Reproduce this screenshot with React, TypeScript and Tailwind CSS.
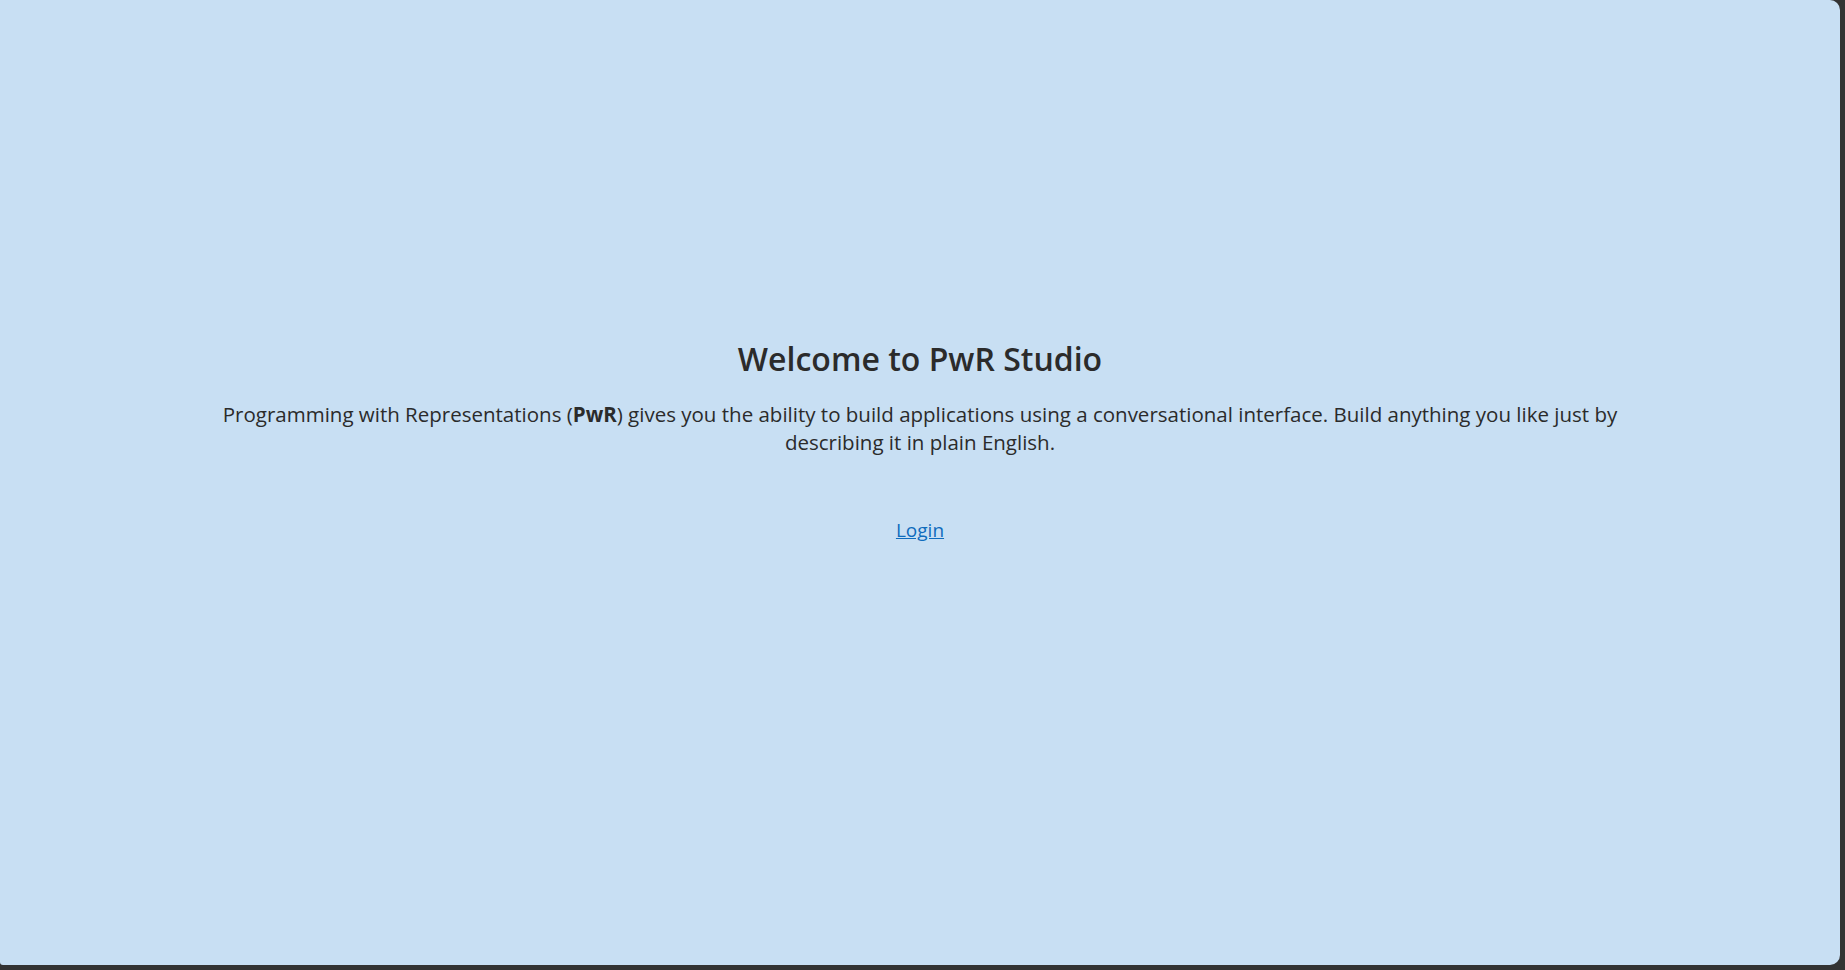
import React from "react";

export default function App() {
    return (
        <div className="h-[970px] w-full bg-[#333333] overflow-hidden">
            <div
                className="flex h-[965px] w-[1840px] flex-col items-center rounded-tr-[10px] rounded-br-[10px] rounded-bl-[3px] bg-[#c8dff3] pt-[337px] text-[#2b2b2b]"
                style={{ fontFamily: '"Open Sans", "Noto Sans", sans-serif' }}
            >
                <h1 className="text-[32px] font-semibold leading-[44px]">
                    Welcome to PwR Studio
                </h1>

                <p className="mt-[19px] max-w-[1440px] text-center text-[20.5px] leading-[28px]">
                    Programming with Representations (<b className="font-bold">PwR</b>) gives you the ability to build
                    applications using a conversational interface. Build anything you like just by describing it in plain English.
                </p>

                <a href="#" className="mt-[60px] text-[19px] leading-[28px] text-[#0f6cbd] underline">
                    Login
                </a>
            </div>
        </div>
    );
}
